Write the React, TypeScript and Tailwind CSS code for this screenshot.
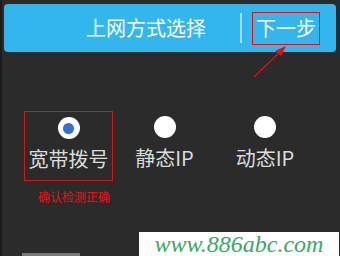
import React from "react";

const font = { fontFamily: '"Noto Sans CJK SC", "Noto Sans", sans-serif' };

const Radio = ({ checked }: { checked?: boolean }) => (
  <span className="w-[22px] h-[22px] rounded-full bg-white flex items-center justify-center">
    {checked && <span className="w-[11px] h-[11px] rounded-full bg-[#2f72d2]" />}
  </span>
);

export default function App() {
  return (
    <div
      className="relative w-[340px] h-[256px] bg-[#2b2b2b] overflow-hidden border-l-[2px] border-[#1c1c1c]"
      style={font}
    >
      {/* header */}
      <div className="mt-[4px] ml-[2px] mr-[4px] h-[48px] rounded-[4px] bg-[#33b6ee] flex items-center text-white text-[20px] leading-none">
        <span className="ml-[80px] w-[124px] text-center whitespace-nowrap">上网方式选择</span>
        <span className="ml-[32px] w-[2px] h-[30px] bg-[#a6dcf5]" />
        <span className="ml-[10px] border-[1.5px] border-[#e01010] px-[3px] h-[33px] flex items-center whitespace-nowrap">
          下一步
        </span>
      </div>

      {/* options */}
      <div className="mt-[59px] flex text-[#dcdcdc] text-[20px] leading-none whitespace-nowrap">
        <div className="ml-[22px] w-[89px] h-[70px] border-[1.5px] border-[#d01818] flex flex-col items-center pt-[5px] gap-[10px]">
          <Radio checked />
          <span>宽带拨号</span>
        </div>
        <div className="ml-[25px] w-[53px] flex flex-col items-center pt-[5px] gap-[10px]">
          <Radio />
          <span>静态IP</span>
        </div>
        <div className="ml-[44px] w-[60px] flex flex-col items-center pt-[5px] gap-[10px]">
          <Radio />
          <span>动态IP</span>
        </div>
      </div>

      <div className="ml-[36px] mt-[10px] text-[12px] leading-none text-[#ee1010]">确认检测正确</div>

      {/* annotation arrow */}
      <svg className="absolute left-0 top-0" width="340" height="256">
        <line x1="252" y1="77" x2="278" y2="52" stroke="#e01010" strokeWidth="1.2" />
        <polygon points="284,46 273,51 279,56" fill="#e01010" />
      </svg>

      {/* watermark */}
      <div className="absolute left-[137px] top-[232px] w-[200px] h-[24px] bg-white flex items-center justify-center">
        <span
          className="text-[#3aa866] text-[24px] italic leading-none"
          style={{ fontFamily: '"Liberation Serif", serif' }}
        >
          www.886abc.com
        </span>
      </div>
      <div className="absolute left-[20px] top-[253px] w-[58px] h-[3px] bg-[#777]" />
    </div>
  );
}
